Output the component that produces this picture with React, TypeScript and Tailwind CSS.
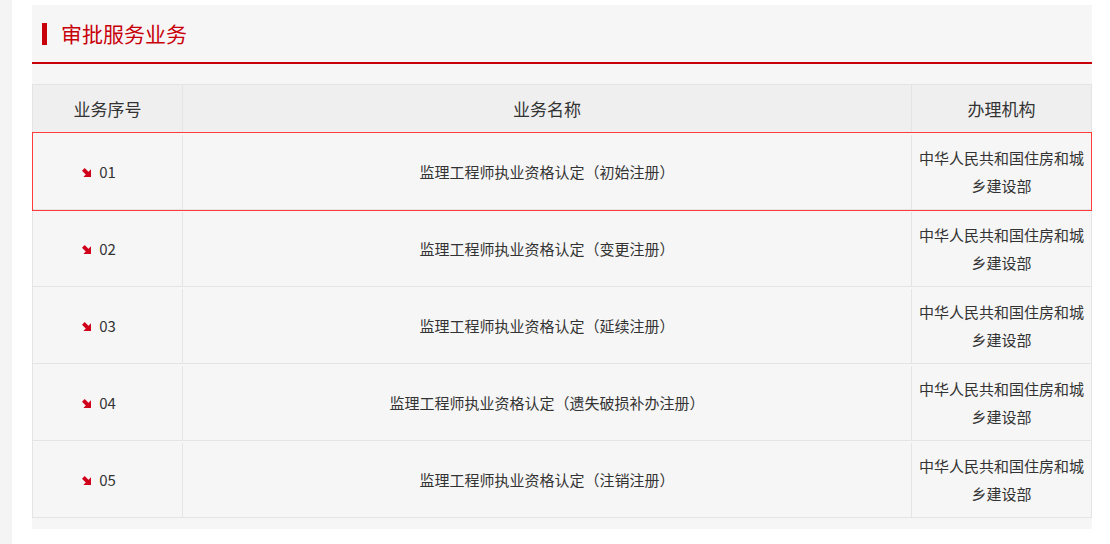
import React from 'react';

type Item = { no: string; name: string; org: string };

const ITEMS: Item[] = [
  { no: '01', name: '监理工程师执业资格认定（初始注册）', org: '中华人民共和国住房和城乡建设部' },
  { no: '02', name: '监理工程师执业资格认定（变更注册）', org: '中华人民共和国住房和城乡建设部' },
  { no: '03', name: '监理工程师执业资格认定（延续注册）', org: '中华人民共和国住房和城乡建设部' },
  { no: '04', name: '监理工程师执业资格认定（遗失破损补办注册）', org: '中华人民共和国住房和城乡建设部' },
  { no: '05', name: '监理工程师执业资格认定（注销注册）', org: '中华人民共和国住房和城乡建设部' },
];

const Arrow = () => (
  <svg width="9" height="9" viewBox="0 0 10 10" className="mr-[8px] shrink-0">
    <polygon points="10,1.5 10,10 1.5,10" fill="#d0021b" />
    <polygon points="0,3 3,0 8,5 5,8" fill="#d0021b" />
  </svg>
);

export default function App() {
  return (
    <div className="min-h-[544px] bg-[#f4f4f4] pl-[12px] font-['Noto_Sans_CJK_SC',sans-serif] text-[#333]">
      <div className="min-h-[544px] bg-white pl-[20px] pr-[18px] pt-[5px] pb-[15px]">
        <div className="w-[1060px] bg-[#f6f6f6] pb-[11px]">
          {/* Title */}
          <div className="flex h-[59px] items-center border-b-2 border-[#c8000a] pl-[10px]">
            <span className="h-[22px] w-[5px] bg-[#c8000a]" />
            <h2 className="ml-[14px] text-[21px] leading-none text-[#c8000a]">审批服务业务</h2>
          </div>

          {/* Table */}
          <div className="mt-[20px] border border-b-0 border-[#e4e4e4]">
            <div className="flex h-[48px] border-b border-[#e4e4e4] bg-[#efefef] text-[17px]">
              <div className="flex w-[149px] items-center justify-center">业务序号</div>
              <div className="flex flex-1 items-center justify-center border-l border-[#e4e4e4]">业务名称</div>
              <div className="flex w-[180px] items-center justify-center border-l border-[#e4e4e4]">办理机构</div>
            </div>
            {ITEMS.map((it, i) => (
              <div
                key={it.no}
                className={`relative flex h-[77px] border-b border-[#e4e4e4] pt-[2px] text-[15px] ${
                  i === 0 ? 'z-10 outline outline-1 outline-[#ff3b3b]' : ''
                }`}
              >
                <div className="flex w-[149px] items-center justify-center">
                  <span className="-ml-[17px] inline-flex items-center">
                    <Arrow />
                    {it.no}
                  </span>
                </div>
                <div className="flex flex-1 items-center justify-center border-l border-[#e4e4e4]">{it.name}</div>
                <div className="flex w-[180px] items-center justify-center border-l border-[#e4e4e4] px-[6px] text-center leading-[28px]">
                  {it.org}
                </div>
              </div>
            ))}
          </div>
        </div>
      </div>
    </div>
  );
}
